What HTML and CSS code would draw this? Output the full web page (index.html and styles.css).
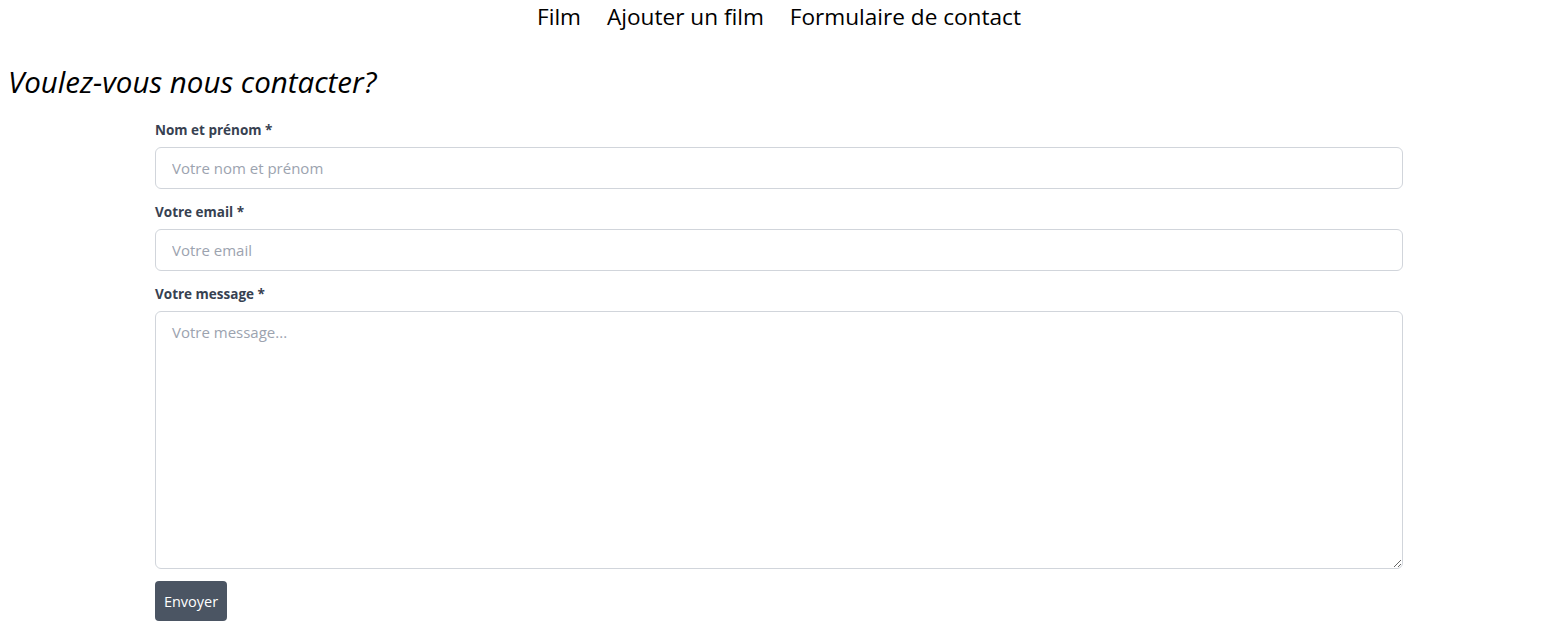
FILE: index.html
```html
<!DOCTYPE html>
<html lang="fr">
<head>
<meta charset="utf-8">
<title>Formulaire de contact</title>
<link rel="stylesheet" href="styles.css">
</head>
<body>
<nav class="nav">
  <a class="nav-link" href="#">Film</a>
  <a class="nav-link" href="#">Ajouter un film</a>
  <a class="nav-link" href="#">Formulaire de contact</a>
</nav>
<h1 class="title">Voulez-vous nous contacter?</h1>
<form class="form">
  <label class="label" for="nom">Nom et prénom *</label>
  <input class="field" id="nom" type="text" placeholder="Votre nom et prénom">
  <label class="label" for="email">Votre email *</label>
  <input class="field" id="email" type="email" placeholder="Votre email">
  <label class="label" for="msg">Votre message *</label>
  <textarea class="field area" id="msg" placeholder="Votre message..."></textarea>
  <button class="btn" type="button">Envoyer</button>
</form>
</body>
</html>
```

FILE: styles.css
```css
html, body {
  margin: 0;
  padding: 0;
  background: #ffffff;
}
body {
  font-family: "Open Sans", "Noto Sans", sans-serif;
  color: #000;
}
.nav {
  display: flex;
  justify-content: center;
  gap: 26px;
  padding: 0 0 0 12px;
  height: 34px;
}
.nav-link {
  font-size: 22.6px;
  line-height: 34px;
  color: #000;
  text-decoration: none;
}
.title {
  margin: 30px 0 0 8px;
  font-size: 29.5px;
  font-weight: 400;
  font-style: italic;
  line-height: 36px;
}
.form {
  display: flex;
  flex-direction: column;
  align-items: flex-start;
  width: 1248px;
  margin: 20px 0 0 155px;
}
.label {
  font-size: 13.5px;
  font-weight: 700;
  line-height: 20px;
  color: #374151;
  margin: 0 0 7px 0;
}
.field {
  box-sizing: border-box;
  width: 100%;
  height: 42px;
  padding: 8px 16px;
  border: 1px solid #d1d5db;
  border-radius: 6px;
  font-family: "Open Sans", "Noto Sans", sans-serif;
  font-size: 15px;
  color: #111827;
  margin: 0 0 13px 0;
  background: #fff;
}
.field::placeholder {
  color: #9ca3af;
}
.area {
  height: 258px;
  padding-top: 10px;
  margin-bottom: 12px;
  resize: vertical;
}
.btn {
  height: 40px;
  width: 72px;
  padding: 0;
  border: none;
  border-radius: 4px;
  background: #4b5563;
  color: #fff;
  font-family: "Open Sans", "Noto Sans", sans-serif;
  font-size: 14.5px;
}
```
